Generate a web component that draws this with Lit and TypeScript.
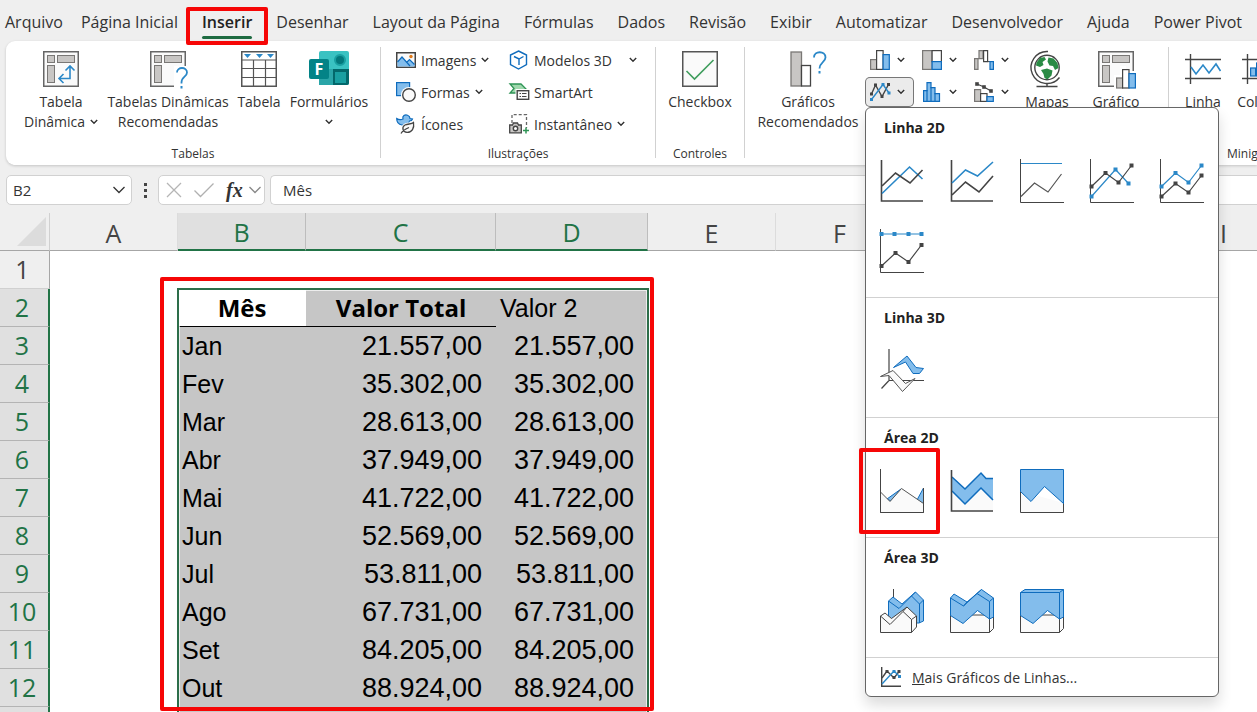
import { LitElement, html, svg, css, nothing } from "lit";
import { customElement, property } from "lit/decorators.js";
import { classMap } from "lit/directives/class-map.js";

const D = "#444";
const B = "#2b88c8";
const F = "#83bdec";
const E = "#0f6cbd";

type Icon = { w: number; h: number; body: unknown };

const pivotFrame = svg`
  <rect x=".75" y=".75" width="34.5" height="34.5" fill="#fafafa" stroke="#666" stroke-width="1.5"/>
  <g fill="#c8c6c4" stroke="#797775"><rect x="4.5" y="4.5" width="7" height="7"/><rect x="14.5" y="4.5" width="17" height="7"/><rect x="4.5" y="14.5" width="7" height="17"/></g>`;

const axes = svg`<path d="M.5 0V43.5H44" fill="none" stroke=${D}/>`;
const heavyAxes = svg`<path d="M1.5 1V42H43" fill="none" stroke=${D} stroke-width="1.6"/>`;

const line = (pts: string, color: string, width = 1.6) =>
  svg`<polyline points=${pts} fill="none" stroke=${color} stroke-width=${width}/>`;
const marked = (pts: string, color: string, size = 4, width = 1.2) => svg`${line(pts, color, width)}
  ${pts.split(" ").map((p) => {
    const [x, y] = p.split(",").map(Number);
    return svg`<rect x=${x - size / 2} y=${y - size / 2} width=${size} height=${size} fill=${color}/>`;
  })}`;

const icons: Record<string, Icon> = {
  pivot: { w: 36, h: 36, body: svg`${pivotFrame}
    <path d="M27 15.5V27.5H16.5M22.5 19.5L27 15L31.5 19.5M20.5 23L16 27.5L20.5 32" fill="none" stroke=${B} stroke-width="1.6"/>` },
  pivotHelp: { w: 36, h: 36, body: svg`${pivotFrame}
    <path d="M24 15H38V38H24Z" fill="#fff"/>
    <path d="M27 21.5C27 15.5 37 15.5 37 21.5C37 26 31.5 25.5 31.5 31.5V32.5" fill="none" stroke=${B} stroke-width="1.8"/>
    <rect x="30.5" y="35" width="2" height="2.5" fill=${B}/>` },
  table: { w: 36, h: 36, body: svg`
    <rect x=".75" y=".75" width="34.5" height="34.5" fill="#fff" stroke="#555" stroke-width="1.5"/>
    <path d="M1 9H35M1 17.5H35M1 26.5H35M12.5 9V35M24.5 9V35" fill="none" stroke="#555" stroke-width="1.2"/>
    <path d="M3 3H10L6.5 7ZM15 3H22L18.5 7ZM26 3H33L29.5 7Z" fill=${B}/>` },
  forms: { w: 40, h: 36, body: svg`
    <rect x="10" y="0" width="30" height="34" rx="2" fill="#3ac2c2"/>
    <path d="M12 18H40V32Q40 34 38 34H12Q10 34 10 32V18Z" fill="#03686b"/>
    <rect x="10" y="18" width="14" height="16" fill="#2aa5a8"/><rect x="26" y="21" width="11" height="11" fill="#199fa1"/>
    <circle cx="31" cy="9" r="5" fill="#03787c" stroke="#199fa1" stroke-width="2"/>
    <rect x="0" y="8" width="20" height="20" rx="2" fill="#038387"/>
    <text x="10" y="24" font-size="16" font-weight="700" text-anchor="middle" fill="#fff">F</text>` },
  picture: { w: 20, h: 20, body: svg`
    <rect x=".75" y="2.75" width="18.5" height="14.5" fill="#fafafa" stroke=${D} stroke-width="1.5"/>
    <path d="M1.5 12L6 7L11 12L13.5 9.5L18.5 14V16.5H1.5Z" fill=${F}/>
    <path d="M1.5 12L6 7L14 16M11 12L13.5 9.5L18.5 14.5" fill="none" stroke=${E} stroke-width="1.2"/>
    <circle cx="15" cy="6.5" r="1.7" fill="#e07b1c"/>` },
  shapes: { w: 20, h: 20, body: svg`
    <rect x=".6" y=".6" width="13" height="13" fill=${F} stroke=${E} stroke-width="1.2"/>
    <circle cx="13" cy="13" r="8" fill="#fff"/><circle cx="13" cy="13" r="6.3" fill="#fafafa" stroke=${D} stroke-width="1.4"/>` },
  icons: { w: 20, h: 20, body: svg`
    <path d="M.7 4.5C3 6 5 6 7 5C6 2 9 .2 11.5 1.2C13.5 2 14 3.5 14 4.5L16.5 5C16 7 14.5 7 13.5 7C13 10 9.5 12 6 11C2.5 10.5 .7 7.5 .7 4.5Z" fill=${F} stroke=${E} stroke-width="1.2"/>
    <path d="M17.5 8.5C18.5 14 16 18.5 11 18.3C6.5 18 5.5 13 9 11C12 9.5 15.5 10.5 17.5 8.5Z" fill="#fff" stroke="#fff" stroke-width="3"/>
    <path d="M17.5 8.5C18.5 14 16 18.5 11 18.3C6.5 18 5.5 13 9 11C12 9.5 15.5 10.5 17.5 8.5ZM5 19.5C6.5 17 9 15 13 13.5" fill="#fafafa" stroke=${D} stroke-width="1.3"/>` },
  cube: { w: 20, h: 20, body: svg`
    <path d="M9.5 1L17.5 5V14.5L9.5 19L1.5 14.5V5Z" fill="#fff" stroke=${E} stroke-width="1.4"/>
    <path d="M5 6.5L10 9L14.5 6.5M10 9V15" fill="none" stroke=${E} stroke-width="1.4"/>` },
  smartart: { w: 20, h: 20, body: svg`
    <path d="M1 2H12L17 7L13 11H1L5 6.5Z" fill="#9fd8ad" stroke="#2e9455" stroke-width="1.3"/>
    <rect x="6.5" y="7" width="14" height="12" fill="#fff"/>
    <rect x="8.2" y="8.7" width="11.5" height="8.6" fill="#fafafa" stroke=${D} stroke-width="1.4"/>
    <path d="M10.5 11.5H12M13 11.5H17.5M10.5 14.5H12M13 14.5H17.5" stroke=${D}/>` },
  snapshot: { w: 20, h: 20, body: svg`
    <path d="M3 9V.7H17.5V14" fill="none" stroke="#666" stroke-width="1.3" stroke-dasharray="3 2"/>
    <path d="M.7 11H3.5L4.5 9H8.5L9.5 11H12.3V18.8H.7Z" fill="#c8c6c4" stroke=${D} stroke-width="1.3"/>
    <circle cx="6.5" cy="14.5" r="2.2" fill="#fff" stroke=${D} stroke-width="1.4"/>
    <path d="M17 13.5V19.5M14 16.5H20" stroke="#2e9455" stroke-width="1.5"/>` },
  check: { w: 36, h: 36, body: svg`
    <rect x=".75" y=".75" width="34.5" height="34.5" fill="#fafafa" stroke="#555" stroke-width="1.5"/>
    <path d="M4.5 20L12.5 28L31.5 9" fill="none" stroke="#3f9d5d" stroke-width="1.6"/>` },
  chartHelp: { w: 36, h: 36, body: svg`
    <rect x="1" y="1" width="10.5" height="34" fill="#c8c6c4" stroke="#797775" stroke-width="1.3"/>
    <rect x="11.5" y="14.5" width="9" height="20.5" fill="#fff" stroke=${D} stroke-width="1.3"/>
    <path d="M24 6.5C24 -.5 35.5 -.5 35.5 6.5C35.5 11 29.5 11.5 29.5 17.5" fill="none" stroke=${B} stroke-width="1.8"/>
    <rect x="28.5" y="20" width="2" height="2.5" fill=${B}/>` },
  column: { w: 20, h: 20, body: svg`
    <rect x=".6" y="9.6" width="6" height="9.8" fill="#c8c6c4" stroke="#797775" stroke-width="1.2"/>
    <rect x="6.6" y=".6" width="6.5" height="18.8" fill="#fff" stroke=${D} stroke-width="1.2"/>
    <rect x="13.1" y="4.6" width="6.2" height="14.8" fill=${F} stroke=${E} stroke-width="1.2"/>` },
  treemap: { w: 20, h: 20, body: svg`
    <rect x=".6" y=".6" width="9.5" height="18.8" fill="#c8c6c4" stroke="#797775" stroke-width="1.2"/>
    <rect x="10.1" y=".6" width="9.3" height="11" fill="#fff" stroke=${D} stroke-width="1.2"/>
    <rect x="10.1" y="11.6" width="9.3" height="7.8" fill=${F} stroke=${E} stroke-width="1.2"/>` },
  waterfall: { w: 20, h: 20, body: svg`
    <path d="M.6 19.4V8.6H5V.6H9V8.6H4V19.4Z" fill="#c8c6c4" stroke="#797775" stroke-width="1.2"/>
    <path d="M9.6 .6H13.6V11.6H9.6Z" fill="#fff" stroke=${D} stroke-width="1.2"/><path d="M13.6 11.6H16.5" stroke=${D}/>
    <rect x="16" y="11.6" width="3.4" height="7.8" fill=${F} stroke=${E} stroke-width="1.2"/>` },
  lines: { w: 20, h: 20, body: svg`
    ${marked("1.5,12 5.5,3 12,14.5 18.5,2.5", D, 3, 1.4)}${marked("1.5,17.5 13,2.5 19,11", B, 3, 1.4)}` },
  histogram: { w: 20, h: 20, body: svg`
    <path d="M1.6 19.4V8.6H5V.6H9V5.6H13V11.6H17.5V19.4Z" fill=${F} stroke=${E} stroke-width="1.2"/>
    <path d="M5 8V19M9 5V19M13 11V19" stroke=${E} stroke-width="1.2"/>` },
  combo: { w: 20, h: 20, body: svg`
    <rect x=".6" y="7.6" width="6" height="11.8" fill="#c8c6c4" stroke="#797775" stroke-width="1.2"/>
    <rect x="6.6" y="11.6" width="6.4" height="7.8" fill="#fff" stroke=${D} stroke-width="1.2"/>
    <rect x="13" y="14.6" width="6.3" height="4.8" fill=${F} stroke=${E} stroke-width="1.2"/>
    ${marked("3,2 10,5 17,9", D, 3.6)}` },
  globe: { w: 36, h: 36, body: svg`
    <circle cx="18" cy="16.5" r="12.2" fill="#fff" stroke=${D} stroke-width="1.4"/>
    <path d="M7.5 11.5L11 7L15.5 6L17 8.5L13.5 11L14.5 14L11 16L7 14.5ZM19.5 6.5L24.5 7.5L28.5 12L29.5 17L26 19L24 15L20.5 14.5L18.5 10.5ZM12 19L18 17.5L23.5 19.5L22.5 24.5L18.5 28.5L15.5 27L14.5 23Z" fill="#2a8b45"/>
    <path d="M19 .5A16 16 0 1 0 30.5 26.5M18 32.5V35.5M7.5 35.5H28.5" fill="none" stroke=${D} stroke-width="1.4"/>` },
  pivotChart: { w: 36, h: 36, body: svg`${pivotFrame}
    <path d="M16 24H22V15H28V20H39V40H16Z" fill="#fff"/>
    <rect x="18.6" y="27" width="6" height="10" fill="#c8c6c4" stroke="#797775" stroke-width="1.2"/>
    <rect x="24.6" y="18.6" width="6.4" height="18.4" fill="#fff" stroke=${D} stroke-width="1.2"/>
    <rect x="31" y="22.6" width="6.4" height="14.4" fill=${F} stroke=${E} stroke-width="1.2"/>` },
  sparkLine: { w: 36, h: 36, body: svg`
    <path d="M0 8.5H36M0 27.5H36M5.5 3V33" stroke=${D} stroke-width="1.4"/>${line("6,16 11,23 18,14 24,22 31,13 35.5,20", B)}` },
  sparkColumn: { w: 36, h: 36, body: svg`
    <path d="M0 8.5H36M0 27.5H36M5.5 3V33" stroke=${D} stroke-width="1.4"/>
    <rect x="8.6" y="17" width="5" height="8" fill=${F} stroke=${E} stroke-width="1.2"/><rect x="14.6" y="12" width="5" height="13" fill=${F} stroke=${E} stroke-width="1.2"/><rect x="24.6" y="15" width="5" height="10" fill=${F} stroke=${E} stroke-width="1.2"/>` },
  line: { w: 44, h: 44, body: svg`${heavyAxes}${line("2,34.5 29.5,8 42.5,20", B)}${line("2,27 15.5,14 30,24 42.5,11", D)}` },
  lineStacked: { w: 44, h: 44, body: svg`${heavyAxes}${line("2,24 15.5,11 27.5,17 43,3", B)}${line("2,36 15.5,23 29,33 43,17", D)}` },
  line100: { w: 44, h: 44, body: svg`${axes}${line("1,4.5 42,4.5", B, 1.2)}${line("1,37.5 14.5,24 28,33 41.5,15", "#555", 1.2)}` },
  lineMarked: { w: 44, h: 44, body: svg`${axes}${marked("1.5,37.5 25.5,10.5 38.5,24.5", B)}${marked("1.5,27.5 15.5,14 28.5,23.5 41.5,6.5", D)}` },
  lineMarkedStacked: { w: 44, h: 44, body: svg`${axes}${marked("1.5,27.5 15.5,14 28.5,23.5 41.5,6.5", B)}${marked("1.5,37.5 15.5,24.5 28.5,33.5 41.5,16.5", D)}` },
  lineMarked100: { w: 44, h: 44, body: svg`${axes}${marked("1.5,5 14.5,5 28.5,5 41.5,5", B)}${marked("1.5,37 15.5,24 28.5,33 41.5,16", D)}` },
  line3d: { w: 44, h: 44, body: svg`
    <path d="M9 0V31M9 31.5H44M9 31.5L1.5 39.5" fill="none" stroke=${D} stroke-width="1.2"/>
    <path d="M13.5 18.5L27 7L36 18.5L43.5 19.5L39.5 24.5H33L25.5 13Z" fill=${F} stroke=${E}/>
    <path d="M.5 27.500L13 21.500L25.500 34.500L35 29.500L22.500 42.500L9 26.500Z" fill="#fafafa" stroke="#555"/>` },
  area: { w: 44, h: 44, body: svg`
    <path d="M7 30L21 20L11 32ZM37 31L43.5 19V35Z" fill=${F} stroke=${E}/>
    <path d="M.5 23L10 32.5L21.5 19.5L43.5 34.5V43.5H.5Z" fill="#fafafa" stroke="#555"/>
    <path d="M.5 0V43.5H43.5V19" fill="none" stroke=${D}/>` },
  areaStacked: { w: 44, h: 44, body: svg`
    <path d="M2 22L15 35L31 19L43 31V41H2Z" fill="#fafafa"/>
    <path d="M2 8L15 20L31 4L36 9.5H43V31L31 19L15 35L2 22Z" fill=${F}/>
    <path d="M2 8L15 20L31 4L36 9.5H43M2 22L15 35L31 19L43 31" fill="none" stroke=${E} stroke-width="1.5"/>${heavyAxes}` },
  area100: { w: 44, h: 44, body: svg`
    <path d="M.5 22V43.5H43.5V34" fill="#fafafa" stroke=${D}/>
    <path d="M.5 .5H43.5V34.5L24.5 17.5L11 32.5L.5 22.5Z" fill=${F} stroke=${E}/>` },
  area3d: { w: 44, h: 44, body: svg`
    <path d="M13.5 0V10" stroke=${D}/>
    <path d="M8.5 12L13 8L22 15L35.5 3L43.5 11V32L39 34H8.5Z" fill=${F} stroke=${E}/>
    <path d="M8.5 12L19 19.5L31.5 7L39.5 15V34M31.5 7L35.5 3M39.5 15L43.5 11" fill="none" stroke=${E}/>
    <path d="M.5 27L5 24L11.5 29.5L27 18L36.5 27V38L31.5 43.5H.5Z" fill="#fafafa" stroke=${D}/>
    <path d="M.5 27L10 35.5L23 22.5L31.5 30.5V43.5M31.5 30.5L36.5 27M23 22.5L27 18" fill="none" stroke=${D}/>` },
  area3dStacked: { w: 44, h: 44, body: svg`
    <path d="M.5 26V43.5H39.5L43.5 39.5V26Z" fill="#fafafa" stroke=${D}/><path d="M39.5 30V43.5" stroke=${D}/>
    <path d="M.5 9L4 5L17 13L31.5 .5L43.5 9V28L39.5 30L27.5 21.5L13 34.5L.5 26.5Z" fill=${F} stroke=${E}/>
    <path d="M.5 9L13.5 17L27 4.5L39.5 12.5V30M39.5 12.5L43.5 9M27 4.5L31.5 .5M13.5 17L17 13" fill="none" stroke=${E}/>` },
  area3d100: { w: 44, h: 44, body: svg`
    <path d="M.5 26V43.5H39.5L43.5 39.5V26Z" fill="#fafafa" stroke=${D}/><path d="M39.5 30V43.5" stroke=${D}/>
    <path d="M.5 3.5L5 .5H43.5V28L39.5 30L27.5 21.5L13 34.5L.5 26.5Z" fill=${F} stroke=${E}/>
    <path d="M.5 3.5H39.5V30M39.5 3.5L43.5 .5" fill="none" stroke=${E}/>` },
  moreLines: { w: 20, h: 20, body: svg`
    <path d="M.7 0V19.3H20" fill="none" stroke=${D} stroke-width="1.4"/>${line("1,11 6,4 13,11 18.5,4", D, 1.4)}${line("1,17 13,4 19,10", B, 1.4)}
    <path d="M4.5 3H7.5V6H4.5ZM11.5 9H14.5V12H11.5ZM16.5 3H19.5V6H16.5Z" fill=${D}/><path d="M11.5 3H14.5V6H11.5ZM17 8H20V11H17Z" fill=${B}/>` },
  cancel: { w: 16, h: 16, body: svg`<path d="M1 1L15 15M15 1L1 15" stroke="#b5b5b5" stroke-width="1.3"/>` },
  accept: { w: 20, h: 16, body: svg`<path d="M.5 8.5L6.5 14.5L19.5 1.5" fill="none" stroke="#b0b0b0" stroke-width="1.3"/>` },
  chevron: { w: 8, h: 6, body: svg`<path d="M.8 1L4 4.3L7.2 1" fill="none" stroke="#333" stroke-width="1.4"/>` },
  chevronWide: { w: 12, h: 8, body: svg`<path d="M.5 1L6 6.5L11.5 1" fill="none" stroke="currentColor" stroke-width="1.3"/>` },
};

const icon = (name: string) => {
  const i = icons[name];
  return html`<svg class="icon" width=${i.w} height=${i.h} viewBox="0 0 ${i.w} ${i.h}" aria-hidden="true">${i.body}</svg>`;
};

const base = css`
  *, *::before, *::after { box-sizing: border-box; }
  button, input { font: inherit; color: inherit; border: 0; margin: 0; padding: 0; background: none; }
  .icon { display: block; flex: none; overflow: visible; }
  .mark { position: absolute; border: 4px solid #f60606; border-radius: 2px; pointer-events: none; z-index: 5; }
`;

@customElement("ribbon-tabs")
class RibbonTabs extends LitElement {
  static styles = [base, css`
    :host { display: block; }
    .tabs { display: flex; align-items: center; height: 41px; padding: 2px 0 0 5px; gap: 24px; }
    .tab { position: relative; flex: none; line-height: 24px; font-size: 16px; color: #333; white-space: nowrap; height: 28px; }
    .file { margin-right: -6px; }
    .current { font-weight: 600; color: #222; }
    .current::after { content: ""; position: absolute; left: 0; right: 0; bottom: -3px; height: 3px; border-radius: 2px; background: #1e6b41; }
    .mark { inset: -1px -16px -9px -16px; }
  `];
  names = ["Arquivo", "Página Inicial", "Inserir", "Desenhar", "Layout da Página", "Fórmulas", "Dados", "Revisão", "Exibir", "Automatizar", "Desenvolvedor", "Ajuda", "Power Pivot"];
  render() {
    return html`<nav class="tabs">${this.names.map((n, i) => html`
      <button class=${classMap({ tab: true, file: i === 0, current: i === 2 })}>${n}${i === 2 ? html`<span class="mark"></span>` : nothing}</button>`)}</nav>`;
  }
}

@customElement("excel-ribbon")
class ExcelRibbon extends LitElement {
  static styles = [base, css`
    :host { display: block; padding-left: 6px; font-size: 14px; color: #333; }
    .ribbon { display: flex; height: 124px; background: #fff; border-radius: 9px 0 0 9px; box-shadow: 0 1px 3px #0000002e; padding: 6px 0 7px; overflow: hidden; }
    .group { flex: none; display: flex; flex-direction: column; border-right: 1px solid #d1d1d1; }
    .row { flex: 1; display: grid; align-items: start; }
    .caption { text-align: center; font-size: 12px; line-height: 16px; height: 12px; }
    .tables { width: 375px; }
    .tables .row { grid-template-columns: 98px 116px 66px 74px; padding-left: 6px; }
    .art { width: 275px; }
    .art .row { grid-template-columns: 113px 1fr; grid-template-rows: repeat(3, 32px); padding-left: 15px; }
    .controls { width: 89px; }
    .charts { width: 424px; }
    .charts .row { grid-template-columns: 114px 52px 52px 52px 52px 86px; padding-left: 6px; }
    .spark { width: 184px; border-right: 0; }
    .spark .row { grid-template-columns: 68px 46px; }
    .big { display: flex; flex-direction: column; align-items: center; padding-top: 4px; width: 100%; line-height: 20px; white-space: nowrap; }
    .big .icon { margin-bottom: 5px; }
    .text { display: flex; flex-direction: column; align-items: center; }
    .line { display: flex; align-items: center; gap: 5px; }
    .line .icon { margin-bottom: 0; }
    .drop { padding-top: 7px; }
    .small { display: flex; align-items: center; gap: 5px; height: 26px; white-space: nowrap; }
    .small .apart { margin-left: 12px; }
    .stack { display: flex; flex-direction: column; gap: 2px; margin-top: -2px; }
    .mini { display: flex; align-items: center; gap: 7px; height: 30px; width: 49px; padding-left: 5px; border-radius: 5px; }
    .open { background: #ebebeb; box-shadow: inset 0 0 0 1px #777; }
  `];
  big(name: string, l1: string, l2 = "", drop = false) {
    return html`<button class="big">${icon(name)}<span class="text"><span class="line">${l1}</span>
      ${l2 ? html`<span class="line">${l2}${drop ? icon("chevron") : nothing}</span>` : drop ? html`<span class="line drop">${icon("chevron")}</span>` : nothing}</span></button>`;
  }
  small(name: string, label: string, drop = false, apart = false) {
    return html`<button class="small">${icon(name)}<span>${label}</span>${drop ? html`<span class=${classMap({ apart })}>${icon("chevron")}</span>` : nothing}</button>`;
  }
  mini(name: string, label: string, open = false) {
    return html`<button class=${classMap({ mini: true, open })} aria-label=${label}>${icon(name)}${icon("chevron")}</button>`;
  }
  render() {
    return html`<section class="ribbon">
      <div class="group tables"><div class="row">
        ${this.big("pivot", "Tabela", "Dinâmica", true)}${this.big("pivotHelp", "Tabelas Dinâmicas", "Recomendadas")}
        ${this.big("table", "Tabela")}${this.big("forms", "Formulários", "", true)}
      </div><div class="caption">Tabelas</div></div>
      <div class="group art"><div class="row">
        ${this.small("picture", "Imagens", true)}${this.small("cube", "Modelos 3D", true, true)}
        ${this.small("shapes", "Formas", true)}${this.small("smartart", "SmartArt")}
        ${this.small("icons", "Ícones")}${this.small("snapshot", "Instantâneo", true)}
      </div><div class="caption">Ilustrações</div></div>
      <div class="group controls"><div class="row">${this.big("check", "Checkbox")}</div><div class="caption">Controles</div></div>
      <div class="group charts"><div class="row">
        ${this.big("chartHelp", "Gráficos", "Recomendados")}
        <div class="stack">${this.mini("column", "Colunas")}${this.mini("lines", "Linhas", true)}</div>
        <div class="stack">${this.mini("treemap", "Hierarquia")}${this.mini("histogram", "Estatística")}</div>
        <div class="stack">${this.mini("waterfall", "Cascata")}${this.mini("combo", "Combinação")}</div>
        ${this.big("globe", "Mapas")}${this.big("pivotChart", "Gráfico")}
      </div></div>
      <div class="group spark"><div class="row">${this.big("sparkLine", "Linha")}${this.big("sparkColumn", "Coluna")}</div><div class="caption">Minigráficos</div></div>
    </section>`;
  }
}

@customElement("formula-bar")
class FormulaBar extends LitElement {
  static styles = [base, css`
    :host { display: block; font-size: 15px; color: #333; }
    .bar { display: flex; height: 48px; padding: 10px 0 8px 6px; gap: 5px; }
    .box { display: flex; align-items: center; height: 30px; background: #fff; border: 1px solid #d1d1d1; border-radius: 5px; }
    .name { width: 126px; padding: 0 6px; }
    .name input { flex: 1; min-width: 0; }
    .dots { width: 16px; display: flex; flex-direction: column; gap: 3px; align-items: center; justify-content: center; }
    .dots i { width: 3px; height: 3px; background: #444; }
    .tools { width: 107px; padding: 0 2px 0 7px; gap: 12px; }
    .fx { font: italic 700 20px/24px "Liberation Serif", serif; }
    .more { color: #888; margin-left: -6px; }
    .formula { flex: 1; border-right: 0; border-radius: 5px 0 0 5px; }
    .formula input { flex: 1; padding-left: 12px; }
  `];
  render() {
    return html`<div class="bar">
      <div class="box name"><input aria-label="Caixa de nome" .value=${"B2"} /><button aria-label="Abrir nomes">${icon("chevronWide")}</button></div>
      <div class="dots"><i></i><i></i><i></i></div>
      <div class="box tools"><button aria-label="Cancelar">${icon("cancel")}</button><button aria-label="Inserir">${icon("accept")}</button>
        <button class="fx">fx</button><button class="more" aria-label="Mais">${icon("chevronWide")}</button></div>
      <div class="box formula"><input aria-label="Barra de fórmulas" .value=${"Mês"} /></div>
    </div>`;
  }
}

@customElement("work-sheet")
class WorkSheet extends LitElement {
  static styles = [base, css`
    :host { display: block; position: relative; overflow: hidden; background: #fff; flex: 1; min-height: 0; }
    .grid { table-layout: fixed; width: 1288px; border-collapse: separate; border-spacing: 0; font-size: 25px; line-height: 30px; color: #000; }
    .w-head { width: 50px; } .w-128 { width: 128px; } .w-190 { width: 190px; } .w-152 { width: 152px; }
    th, td { height: 38px; padding: 0; white-space: nowrap; overflow: hidden; }
    .col, .num, .corner { font-weight: 400; color: #444; background: #efefef; }
    .col { padding-top: 2px; border-right: 1px solid #dcdcdc; border-bottom: 1px solid #a6a6a6; }
    .corner { border-right: 1px solid #d0d0d0; border-bottom: 1px solid #a6a6a6; }
    .corner svg { display: block; margin-left: 17px; }
    .num { border-right: 1px solid #a6a6a6; border-bottom: 1px solid #d0d0d0; padding: 0 4px 2px 0; }
    .col.on { color: #217346; background: #e0e0e0; border-bottom: 2px solid #217346; border-right-color: #bdbdbd; }
    .num.on { color: #217346; background: #e0e0e0; border-right: 2px solid #217346; border-bottom-color: #b4b4b4; }
    .sel { background: #c6c6c6; }
    .active { background: #fff; }
    .title { font-weight: 700; font-size: 24px; border-bottom: 1px solid #000; }
    .text, .value { font-family: "Liberation Sans", Arial, sans-serif; }
    .text { padding-left: 4px; text-align: left; font-weight: 400; }
    .value { padding-right: 14px; text-align: right; font-size: 27px; }
    .selection { position: absolute; left: 177px; top: 75px; width: 472px; height: 500px; border: 2px solid #2d6e4a; box-shadow: inset 0 0 0 1px #ffffffb0; }
    .mark { left: 160px; top: 64px; width: 494px; bottom: 1px; }
  `];
  months: [string, string][] = [["Jan", "21.557,00"], ["Fev", "35.302,00"], ["Mar", "28.613,00"], ["Abr", "37.949,00"], ["Mai", "41.722,00"], ["Jun", "52.569,00"], ["Jul", "53.811,00"], ["Ago", "67.731,00"], ["Set", "84.205,00"], ["Out", "88.924,00"]];
  rest = html`${[0, 1, 2, 3, 4].map(() => html`<td></td>`)}`;
  render() {
    return html`<table class="grid">
      <colgroup><col class="w-head"><col class="w-128"><col class="w-128"><col class="w-190"><col class="w-152"><col class="w-128"><col class="w-128"><col class="w-128"><col class="w-128"><col class="w-128"></colgroup>
      <thead><tr><th class="corner"><svg width="30" height="30" viewBox="0 0 30 30" aria-hidden="true"><path d="M29 0V29H0Z" fill="#dcdcdc"/></svg></th>
        ${"ABCDEFGHI".split("").map((c) => html`<th class=${classMap({ col: true, on: "BCD".includes(c) })}>${c}</th>`)}</tr></thead>
      <tbody>
        <tr><th class="num">1</th><td></td><td></td><td></td><td></td>${this.rest}</tr>
        <tr><th class="num on">2</th><td></td><th class="title active">Mês</th><th class="title sel">Valor Total</th><th class="text sel">Valor 2</th>${this.rest}</tr>
        ${this.months.map(([m, v], i) => html`<tr><th class="num on">${i + 3}</th><td></td><td class="text sel">${m}</td><td class="value sel">${v}</td><td class="value sel">${v}</td>${this.rest}</tr>`)}
        <tr><th class="num on"></th><td></td><td class="sel"></td><td class="sel"></td><td class="sel"></td>${this.rest}</tr>
      </tbody></table>
      <div class="selection"></div><div class="mark"></div>`;
  }
}

@customElement("chart-menu")
class ChartMenu extends LitElement {
  static styles = [base, css`
    :host { display: block; background: #fff; border: 1px solid #666; border-radius: 6px; box-shadow: 0 8px 14px #00000024; font-size: 14px; color: #222; }
    .section { border-bottom: 1px solid #d1d1d1; padding-bottom: 11px; }
    .heading { margin: 0; padding: 0 18px; font-size: 14px; line-height: 39px; height: 38px; font-weight: 700; }
    .items { display: grid; grid-template-columns: repeat(5, 70px); padding-left: 1px; }
    .item { position: relative; display: grid; place-items: center; height: 70px; }
    .mark { inset: -8px -3px -8px -8px; }
    .more { display: flex; align-items: center; gap: 11px; height: 38px; width: 100%; padding-left: 15px; color: #333; }
  `];
  @property({ attribute: false }) sections: { title: string; items: string[] }[] = [
    { title: "Linha 2D", items: ["line", "lineStacked", "line100", "lineMarked", "lineMarkedStacked", "lineMarked100"] },
    { title: "Linha 3D", items: ["line3d"] },
    { title: "Área 2D", items: ["area", "areaStacked", "area100"] },
    { title: "Área 3D", items: ["area3d", "area3dStacked", "area3d100"] },
  ];
  render() {
    return html`${this.sections.map((s) => html`<section class="section"><h2 class="heading">${s.title}</h2>
      <div class="items">${s.items.map((n, i) => html`<button class="item" aria-label="${s.title} ${i + 1}">${icon(n)}${n === "area" ? html`<span class="mark"></span>` : nothing}</button>`)}</div></section>`)}
      <button class="more">${icon("moreLines")}<span><u>M</u>ais Gráficos de Linhas...</span></button>`;
  }
}

@customElement("app-root")
class AppRoot extends LitElement {
  static styles = [base, css`
    :host { display: block; font-family: "Open Sans", "Noto Sans", sans-serif; }
    .window { position: relative; display: flex; flex-direction: column; height: 100vh; overflow: hidden; background: #efefef; }
    .menu { position: absolute; left: 865px; top: 107px; width: 354px; z-index: 4; }
  `];
  render() {
    return html`<main class="window"><ribbon-tabs></ribbon-tabs><excel-ribbon></excel-ribbon><formula-bar></formula-bar><work-sheet></work-sheet>
      <chart-menu class="menu"></chart-menu></main>`;
  }
}
